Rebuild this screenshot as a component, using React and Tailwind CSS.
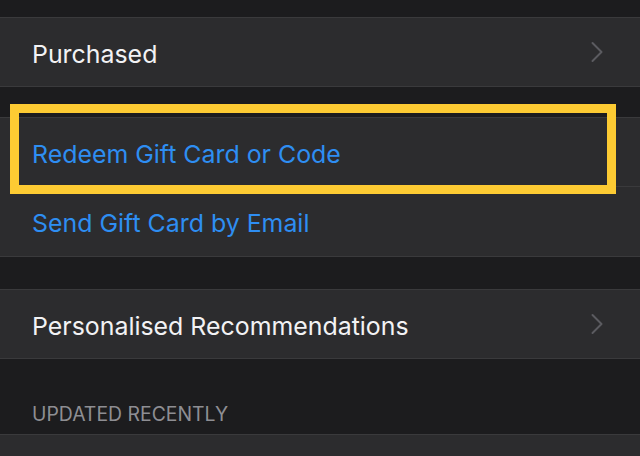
import React from 'react';

const Chevron = () => (
  <svg width="14" height="22" viewBox="0 0 14 22" fill="none" className="shrink-0">
    <path d="M2.5 2 L11.5 11 L2.5 20" stroke="#5b5b60" strokeWidth="2" strokeLinecap="round" strokeLinejoin="round" />
  </svg>
);

const Row = ({ label, blue, chevron, divider, h = 'h-[68px]' }) => (
  <div className={`relative ${h} flex items-center pl-8 pr-[36px]`}>
    <span className={`flex-1 pt-[5px] text-[24.9px] ${blue ? 'text-[#2e8ef2]' : 'text-[#f2f2f4]'}`}>{label}</span>
    {chevron && <Chevron />}
    {divider && <div className="absolute left-8 right-0 bottom-0 h-px bg-[#3a3a3c]" />}
  </div>
);

const Group = ({ children }) => (
  <div className="bg-[#2c2c2e] border-y border-[#3a3a3c]">{children}</div>
);

export default function App() {
  return (
    <div className="w-[640px] h-[456px] overflow-hidden bg-[#1c1c1e]" style={{ fontFamily: 'Inter, "Noto Sans", sans-serif' }}>
      <div className="h-[17px]" />
      <Group>
        <Row label="Purchased" chevron />
      </Group>
      <div className="h-[30px]" />
      <div className="relative">
        <Group>
          <Row label="Redeem Gift Card or Code" blue divider h="h-[69px]" />
          <Row label="Send Gift Card by Email" blue h="h-[69px]" />
        </Group>
        <div className="absolute left-[10px] top-[-13px] w-[606px] h-[90px] border-[9px] border-[#fdcb33]" />
      </div>
      <div className="h-[32px]" />
      <Group>
        <Row label="Personalised Recommendations" chevron />
      </Group>
      <div className="h-[75px] flex items-end pl-8 pb-[5px]">
        <span className="text-[19.4px] text-[#8e8e93]">UPDATED RECENTLY</span>
      </div>
      <Group>
        <div className="h-[40px]" />
      </Group>
    </div>
  );
}
